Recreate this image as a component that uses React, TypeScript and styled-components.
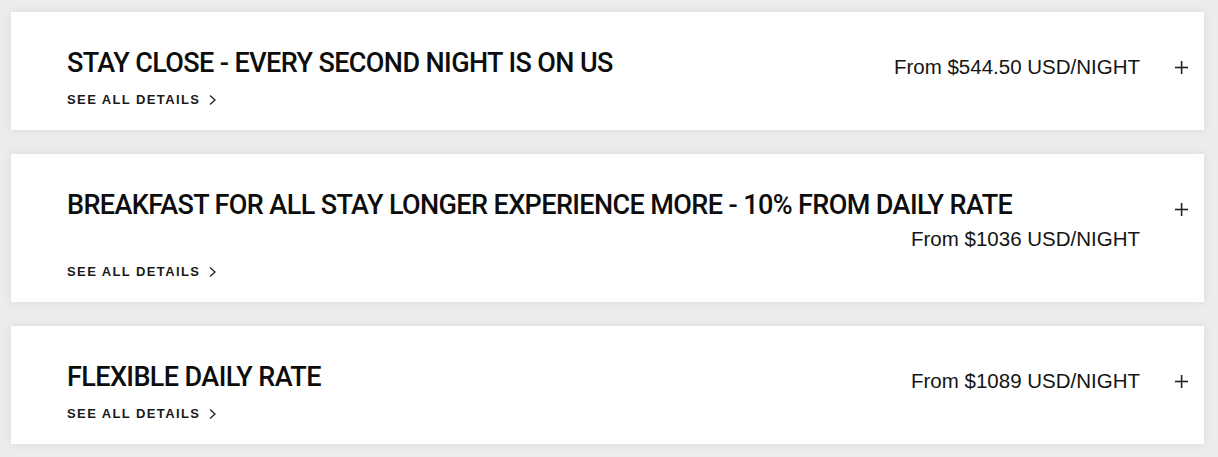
import styled, { createGlobalStyle } from 'styled-components';

const GlobalStyle = createGlobalStyle`
	html, body {
		margin: 0;
		padding: 0;
		background: #ececec;
	}
	body {
		font-family: "Liberation Sans", Arial, sans-serif;
		color: #111;
	}
`;

const OfferList = styled.div`
	display: flex;
	flex-direction: column;
	gap: 24px;
	padding: 12px 14px 12px 11px;
`;

const OfferCard = styled.div`
	display: flex;
	align-items: flex-start;
	background: #fff;
	box-shadow: 0 0 10px rgba(0, 0, 0, 0.07);
	padding: 36px 0 20px 56px;
`;

const OfferBody = styled.div`
	flex: 1;
	min-width: 0;
`;

const OfferHead = styled.div`
	display: flex;
	flex-wrap: wrap;
	align-items: flex-start;
`;

const Title = styled.h2`
	margin: 0 24px 0 0;
	font-family: Roboto, "Liberation Sans", sans-serif;
	font-size: 27px;
	font-weight: 500;
	letter-spacing: -0.6px;
	line-height: 30px;
	color: #0d0d0d;
`;

const Price = styled.div`
	margin-left: auto;
	margin-top: 4px;
	font-size: 20.5px;
	line-height: 30px;
	color: #141414;
	white-space: nowrap;
`;

const DetailsLink = styled.a`
	display: inline-flex;
	align-items: center;
	gap: 8px;
	margin-top: 8px;
	font-size: 13px;
	line-height: 20px;
	font-weight: 700;
	letter-spacing: 1.4px;
	color: #1a1a1a;
	text-decoration: none;
	cursor: pointer;
`;

const ToggleButton = styled.button`
	flex: none;
	display: flex;
	align-items: center;
	justify-content: center;
	width: 22px;
	height: 22px;
	margin: 8px 12px 0 30px;
	padding: 0;
	border: 0;
	background: none;
	cursor: pointer;
`;

const Chevron = () => (
	<svg width="9" height="12" viewBox="0 0 9 12" fill="none">
		<polyline points="2,1.5 7,6 2,10.5" stroke="#222" strokeWidth="1.3" />
	</svg>
);

const Plus = () => (
	<svg width="13" height="13" viewBox="0 0 13 13">
		<rect x="5.8" y="0" width="1.6" height="13" fill="#222" />
		<rect x="0" y="5.7" width="13" height="1.6" fill="#222" />
	</svg>
);

const offers = [
	{ title: 'STAY CLOSE - EVERY SECOND NIGHT IS ON US', price: 'From $544.50 USD/NIGHT' },
	{ title: 'BREAKFAST FOR ALL STAY LONGER EXPERIENCE MORE - 10% FROM DAILY RATE', price: 'From $1036 USD/NIGHT' },
	{ title: 'FLEXIBLE DAILY RATE', price: 'From $1089 USD/NIGHT' },
];

const App = () => (
	<>
		<GlobalStyle />
		<OfferList>
			{offers.map((offer) => (
				<OfferCard key={offer.title}>
					<OfferBody>
						<OfferHead>
							<Title>{offer.title}</Title>
							<Price>{offer.price}</Price>
						</OfferHead>
						<DetailsLink>
							SEE ALL DETAILS
							<Chevron />
						</DetailsLink>
					</OfferBody>
					<ToggleButton aria-label="Expand">
						<Plus />
					</ToggleButton>
				</OfferCard>
			))}
		</OfferList>
	</>
);

export default App;
